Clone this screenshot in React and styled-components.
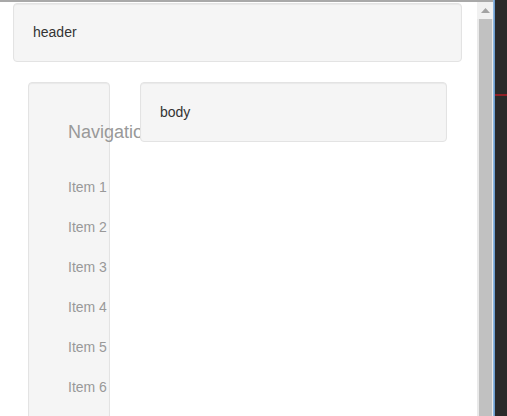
import React from "react";
import styled, { createGlobalStyle } from "styled-components";

const GlobalStyle = createGlobalStyle`
  html, body {
    margin: 0;
    padding: 0;
    background: #fff;
  }
  body {
    font-family: "Liberation Sans", Arial, Helvetica, sans-serif;
    font-size: 14px;
    color: #333;
  }
`;

const Screen = styled.div`
  display: flex;
  width: 507px;
  height: 416px;
  overflow: hidden;
`;

const Window = styled.div`
  display: flex;
  width: 493px;
  border-top: 2px solid #a9a9a9;
`;

const Page = styled.div`
  flex: 1;
  padding: 1px 0 0 13px;
  overflow: hidden;
`;

const Well = styled.div`
  box-sizing: border-box;
  background: #f5f5f5;
  border: 1px solid #e3e3e3;
  border-radius: 4px;
  box-shadow: inset 0 1px 1px rgba(0, 0, 0, 0.05);
`;

const Header = styled(Well)`
  width: 449px;
  height: 59px;
  padding: 0 19px;
  line-height: 57px;
  margin-bottom: 20px;
`;

const Row = styled.div`
  display: flex;
  align-items: flex-start;
  gap: 30px;
  padding-left: 15px;
`;

const Nav = styled(Well)`
  width: 82px;
  height: 420px;
  padding: 39px 0 0 39px;
  white-space: nowrap;
`;

const NavTitle = styled.div`
  font-size: 18px;
  line-height: 20px;
  color: #999;
`;

const NavList = styled.ul`
  list-style: none;
  margin: 25px 0 0;
  padding: 0;
`;

const NavItem = styled.li`
  font-size: 14px;
  line-height: 40px;
  color: #999;
`;

const Body = styled(Well)`
  position: relative;
  z-index: 1;
  width: 307px;
  height: 60px;
  padding: 0 19px;
  line-height: 58px;
`;

const Scrollbar = styled.div`
  display: flex;
  flex-direction: column;
  width: 16px;
  background: #e9e9e9;
`;

const ArrowButton = styled.div`
  display: flex;
  align-items: center;
  justify-content: center;
  height: 17px;
  background: #f1f1f1;
`;

const Thumb = styled.div`
  flex: 1;
  margin: 0 1px 0 2px;
  background: #c1c1c1;
`;

const Edge = styled.div`
  width: 2px;
  background: linear-gradient(to right, #9cc3e8, #5d8fc4);
`;

const Desk = styled.div`
  flex: 1;
  background: #2a2a2a;
  padding-top: 94px;
`;

const RedMark = styled.div`
  height: 2px;
  background: #8e1f26;
`;

const items = ["Item 1", "Item 2", "Item 3", "Item 4", "Item 5", "Item 6"];

export default function App() {
  return (
    <Screen>
      <GlobalStyle />
      <Window>
        <Page>
          <Header>header</Header>
          <Row>
            <Nav>
              <NavTitle>Navigation</NavTitle>
              <NavList>
                {items.map((item) => (
                  <NavItem key={item}>{item}</NavItem>
                ))}
              </NavList>
            </Nav>
            <Body>body</Body>
          </Row>
        </Page>
        <Scrollbar>
          <ArrowButton>
            <svg width="9" height="5" viewBox="0 0 9 5">
              <path d="M0 5 L4.5 0 L9 5 Z" fill="#a3a3a3" />
            </svg>
          </ArrowButton>
          <Thumb />
        </Scrollbar>
      </Window>
      <Edge />
      <Desk>
        <RedMark />
      </Desk>
    </Screen>
  );
}
